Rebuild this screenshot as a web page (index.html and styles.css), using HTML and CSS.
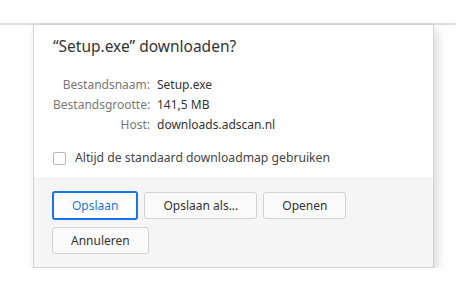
FILE: index.html
```html
<!DOCTYPE html>
<html lang="nl">
<head>
  <meta charset="UTF-8" />
  <meta name="viewport" content="width=device-width, initial-scale=1.0"/>
  <title>Download</title>
  <link rel="stylesheet" href="styles.css">
</head>
<body>
<div class="toolbar"></div>
<div class="dialog">
  <div class="dialog-body">
    <h1 class="title">“Setup.exe” downloaden?</h1>
    <div class="info">
      <span class="label">Bestandsnaam:</span><span class="value">Setup.exe</span>
      <span class="label">Bestandsgrootte:</span><span class="value">141,5 MB</span>
      <span class="label">Host:</span><span class="value">downloads.adscan.nl</span>
    </div>
    <label class="check">
      <span class="box"></span>
      Altijd de standaard downloadmap gebruiken
    </label>
  </div>
  <div class="dialog-footer">
    <button class="btn focused">Opslaan</button>
    <button class="btn">Opslaan als...</button>
    <button class="btn">Openen</button>
    <button class="btn">Annuleren</button>
  </div>
</div>
</body>
</html>
```

FILE: styles.css
```css
body {
  margin: 0;
  padding: 0;
  background: #fff;
  font-family: "Noto Sans", "Open Sans", sans-serif;
  color: #333;
}
.toolbar {
  height: 23px;
  border-bottom: 2px solid #dcdcdc;
}
.dialog {
  width: 399px;
  margin-left: 33px;
  border: 1px solid #d4d4d4;
  border-top: none;
  background: #fff;
  box-shadow: 3px 4px 10px rgba(0, 0, 0, 0.16);
}
.dialog-body {
  padding: 10px 18px 11px 19px;
}
.title {
  margin: 0 0 18px;
  font-size: 15.5px;
  font-weight: normal;
  line-height: 22px;
  color: #333;
}
.info {
  display: grid;
  grid-template-columns: 97px auto;
  column-gap: 7px;
  font-size: 12px;
  line-height: 20px;
}
.label {
  text-align: right;
  color: #777;
}
.value {
  color: #333;
}
.check {
  display: flex;
  align-items: center;
  margin-top: 14px;
  font-size: 12.2px;
  line-height: 18px;
  color: #444;
}
.box {
  width: 11px;
  height: 11px;
  border: 1px solid #b8b8b8;
  border-radius: 2px;
  margin-right: 9px;
}
.dialog-footer {
  display: flex;
  flex-wrap: wrap;
  gap: 8px 6px;
  padding: 13px 18px 13px 18px;
  background: #f5f5f5;
  border-top: 1px solid #ececec;
}
.btn {
  height: 27px;
  padding: 0 18px;
  border: 1px solid #d2d2d2;
  border-radius: 3px;
  background: #fafafa;
  font-family: inherit;
  font-size: 12px;
  color: #333;
}
.focused {
  border: 2px solid #1a73e8;
  margin: -1px 0;
  height: 29px;
  color: #1a73e8;
  background: #fff;
}
```
